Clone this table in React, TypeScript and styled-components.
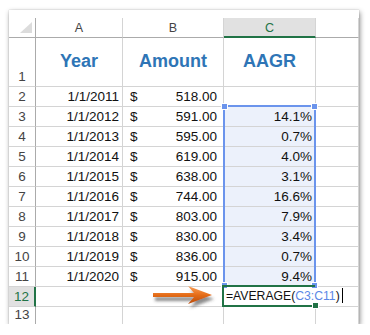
import React from "react";
import styled, { createGlobalStyle } from "styled-components";

const GlobalStyle = createGlobalStyle`
  body {
    margin: 0;
    background: #fff;
    font-family: "Liberation Sans", Arial, sans-serif;
  }
`;

const GRID_LINE = "#d4d4d4";
const HEAD_LINE = "#ababab";
const GREEN = "#217346";
const SEL_BLUE = "#6b94ec";

const Sheet = styled.div`
  margin: 10px 0 0 9px;
  width: 350px;
  height: 314px;
  padding-top: 8px;
  box-sizing: border-box;
  background: #fff;
  overflow: hidden;
  box-shadow: 1px 2px 5px rgba(0, 0, 0, 0.45), 0 0 1px rgba(0, 0, 0, 0.25);
`;

const Grid = styled.div`
  position: relative;
  height: 100%;
  display: grid;
  grid-template-columns: 27px 87px 101px 92px 43px;
  grid-template-rows: 20px 49px repeat(11, 20px) 1fr;
`;

const Corner = styled.div`
  position: relative;
  border-right: 1px solid ${HEAD_LINE};
  border-bottom: 1px solid ${HEAD_LINE};

  &::after {
    content: "";
    position: absolute;
    right: 3px;
    bottom: 4px;
    width: 12px;
    height: 11px;
    background: #dcdcdc;
    clip-path: polygon(100% 0, 100% 100%, 0 100%);
  }
`;

const ColHead = styled.div<{ $active?: boolean }>`
  box-sizing: border-box;
  display: flex;
  align-items: center;
  justify-content: center;
  font-size: 12.5px;
  padding-top: 1px;
  color: ${(p) => (p.$active ? GREEN : "#444")};
  background: ${(p) => (p.$active ? "#e1e1e1" : "#fff")};
  border-right: 1px solid ${GRID_LINE};
  border-bottom: ${(p) => (p.$active ? `2px solid ${GREEN}` : `1px solid ${HEAD_LINE}`)};
`;

const RowHead = styled.div<{ $active?: boolean }>`
  box-sizing: border-box;
  display: flex;
  align-items: flex-end;
  justify-content: center;
  padding-bottom: 2px;
  font-size: 13.5px;
  color: ${(p) => (p.$active ? GREEN : "#444")};
  background: ${(p) => (p.$active ? "#e1e1e1" : "#fff")};
  border-right: ${(p) => (p.$active ? `2px solid ${GREEN}` : `1px solid ${HEAD_LINE}`)};
  border-bottom: 1px solid ${GRID_LINE};
`;

const Cell = styled.div<{ $align?: "left" | "right" | "center"; $sel?: boolean; $spill?: boolean }>`
  box-sizing: border-box;
  display: flex;
  align-items: flex-end;
  justify-content: ${(p) =>
    p.$align === "right" ? "flex-end" : p.$align === "center" ? "center" : "flex-start"};
  padding: 0 3px 2px 3px;
  font-size: 13.5px;
  color: #111;
  white-space: nowrap;
  background: ${(p) => (p.$sel ? "#ecf1fb" : "transparent")};
  border-right: ${(p) => (p.$spill ? "none" : `1px solid ${GRID_LINE}`)};
  border-bottom: 1px solid ${GRID_LINE};
  position: relative;
  z-index: ${(p) => (p.$spill ? 2 : "auto")};
`;

const TitleCell = styled(Cell)`
  align-items: center;
  justify-content: center;
  padding: 0 0 1px 0;
  font-size: 18px;
  font-weight: bold;
  color: #2e75b6;
`;

const MoneyCell = styled(Cell)`
  justify-content: space-between;
  padding: 0 6px 2px 7px;
`;

const Formula = styled.span`
  display: flex;
  align-items: center;
  font-size: 12.2px;
  color: #111;
  margin-left: -1px;
  margin-bottom: 1px;
`;

const Ref = styled.span`
  color: #5b87e6;
`;

const Caret = styled.span`
  display: inline-block;
  width: 1px;
  height: 15px;
  margin-left: 2px;
  background: #000;
`;

const Selection = styled.div`
  position: absolute;
  left: 214px;
  top: 87px;
  width: 93px;
  height: 182px;
  box-sizing: border-box;
  border: 2px solid ${SEL_BLUE};
  pointer-events: none;
  z-index: 3;
`;

const ActiveCell = styled.div`
  position: absolute;
  left: 213px;
  top: 267px;
  width: 93px;
  height: 22px;
  box-sizing: border-box;
  border: 2px solid ${GREEN};
  border-right: none;
  pointer-events: none;
  z-index: 4;
`;

const Handle = styled.div<{ $color: string; $x: "left" | "right"; $y: "top" | "bottom" }>`
  position: absolute;
  width: 5px;
  height: 5px;
  background: ${(p) => p.$color};
  border: 1px solid #fff;
  ${(p) => p.$x}: -4px;
  ${(p) => p.$y}: -4px;
`;

const Arrow = styled.svg`
  position: absolute;
  left: 141px;
  top: 262px;
  z-index: 2;
  overflow: visible;
`;

type Row = { year: string; amount: string; aagr: string };

const rows: Row[] = [
  { year: "1/1/2011", amount: "518.00", aagr: "" },
  { year: "1/1/2012", amount: "591.00", aagr: "14.1%" },
  { year: "1/1/2013", amount: "595.00", aagr: "0.7%" },
  { year: "1/1/2014", amount: "619.00", aagr: "4.0%" },
  { year: "1/1/2015", amount: "638.00", aagr: "3.1%" },
  { year: "1/1/2016", amount: "744.00", aagr: "16.6%" },
  { year: "1/1/2017", amount: "803.00", aagr: "7.9%" },
  { year: "1/1/2018", amount: "830.00", aagr: "3.4%" },
  { year: "1/1/2019", amount: "836.00", aagr: "0.7%" },
  { year: "1/1/2020", amount: "915.00", aagr: "9.4%" },
];

export default function App() {
  return (
    <>
      <GlobalStyle />
      <Sheet>
        <Grid>
          <Corner />
          <ColHead>A</ColHead>
          <ColHead>B</ColHead>
          <ColHead $active>C</ColHead>
          <ColHead />

          <RowHead>1</RowHead>
          <TitleCell>Year</TitleCell>
          <TitleCell>Amount</TitleCell>
          <TitleCell>AAGR</TitleCell>
          <Cell />

          {rows.map((r, i) => (
            <React.Fragment key={r.year}>
              <RowHead>{i + 2}</RowHead>
              <Cell $align="right">{r.year}</Cell>
              <MoneyCell>
                <span>$</span>
                <span>{r.amount}</span>
              </MoneyCell>
              <Cell $align="right" $sel={i > 0}>
                {r.aagr}
              </Cell>
              <Cell />
            </React.Fragment>
          ))}

          <RowHead $active>12</RowHead>
          <Cell />
          <Cell />
          <Cell $spill>
            <Formula>
              =AVERAGE(<Ref>C3:C11</Ref>)<Caret />
            </Formula>
          </Cell>
          <Cell />

          <RowHead>13</RowHead>
          <Cell />
          <Cell />
          <Cell />
          <Cell />

          <Selection>
            <Handle $color={SEL_BLUE} $x="left" $y="top" />
            <Handle $color={SEL_BLUE} $x="right" $y="top" />
            <Handle $color={SEL_BLUE} $x="left" $y="bottom" />
            <Handle $color={SEL_BLUE} $x="right" $y="bottom" />
          </Selection>
          <ActiveCell>
            <Handle $color={GREEN} $x="right" $y="bottom" />
          </ActiveCell>

          <Arrow width="64" height="26" viewBox="0 0 64 26">
            <defs>
              <linearGradient id="arrowFill" x1="0" y1="0" x2="0" y2="1">
                <stop offset="0" stopColor="#f9a25a" />
                <stop offset="0.45" stopColor="#e8701c" />
                <stop offset="1" stopColor="#b84a06" />
              </linearGradient>
              <filter id="arrowShadow" x="-20%" y="-40%" width="150%" height="200%">
                <feDropShadow dx="2" dy="4" stdDeviation="1.6" floodColor="#404040" floodOpacity="0.6" />
              </filter>
            </defs>
            <path
              d="M3 13 L44 13 L38 6 L62 15 L38 24 L44 17 L3 17 Z"
              fill="url(#arrowFill)"
              filter="url(#arrowShadow)"
            />
          </Arrow>
        </Grid>
      </Sheet>
    </>
  );
}
